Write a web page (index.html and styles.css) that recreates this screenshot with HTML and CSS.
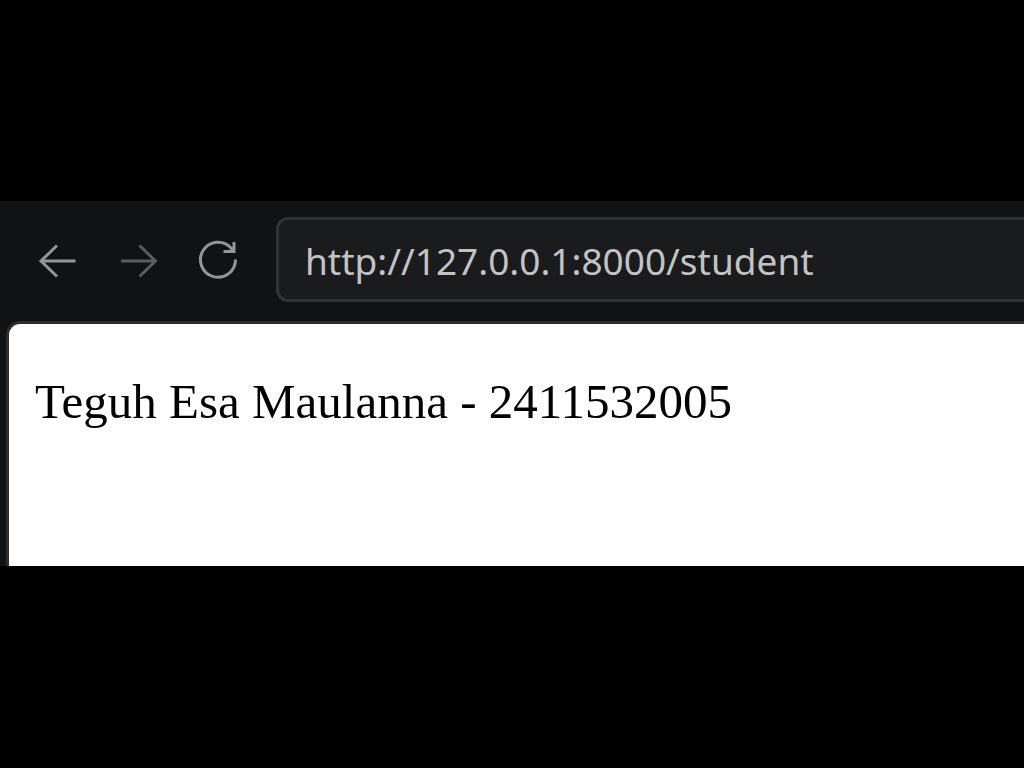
FILE: index.html
```html
<!DOCTYPE html>
<html lang="id">

<head>
  <meta charset="utf-8">
  <meta name="viewport" content="width=device-width, initial-scale=1">
  <title>Student</title>
  <link rel="stylesheet" href="styles.css">
</head>

<body>
  <div class="browser">
    <form class="toolbar">
      <div class="nav">
        <button type="button" class="nav-btn" aria-label="Back">
          <svg viewBox="0 0 40 40"><path d="M37.5 21H3M19 5.5L3 21L19 36.5"/></svg>
        </button>
        <button type="button" class="nav-btn dim" aria-label="Forward">
          <svg viewBox="0 0 40 40"><path d="M3 21H37.5M21.5 5.5L37.5 21L21.5 36.5"/></svg>
        </button>
        <button type="button" class="nav-btn" aria-label="Reload">
          <svg viewBox="0 0 40 40"><path d="M37.5 19.5A17.5 17.5 0 1 1 33 8L35.5 11M36 2V11.5H25.5"/></svg>
        </button>
      </div>
      <input type="text" class="address" aria-label="Address" value="http://127.0.0.1:8000/student">
    </form>
    <main class="page">
      <p>Teguh Esa Maulanna - 2411532005</p>
    </main>
  </div>
</body>

</html>
```

FILE: styles.css
```css
* {
  box-sizing: border-box;
}

body {
  margin: 0;
  padding: 201px 0;
  background: #000;
}

.browser {
  background: #111214;
  overflow: hidden;
}

.toolbar {
  display: flex;
  align-items: center;
  gap: 38px;
  padding: 16px 0 19px 38px;
}

.nav {
  display: flex;
  gap: 40px;
}

.nav-btn {
  width: 40px;
  height: 40px;
  padding: 0;
  border: 0;
  background: none;
  color: #959595;
}

.nav-btn.dim {
  color: #5c5c5c;
}

.nav-btn svg {
  display: block;
  fill: none;
  stroke: currentColor;
  stroke-width: 3;
}

.address {
  flex: 1;
  min-width: 0;
  height: 85px;
  padding: 2px 0 0 26px;
  border: 3px solid #313234;
  border-right: 0;
  border-radius: 12px 0 0 12px;
  outline: 0;
  background: #1a1b1d;
  color: #c3c3c3;
  font: 37px "Noto Sans", sans-serif;
}

.page {
  min-height: 245px;
  margin-left: 6px;
  padding: 50px 26px;
  border: 3px solid #2d2d2f;
  border-width: 3px 0 0 3px;
  border-radius: 14px 0 0 0;
  background: #fff;
  color: #000;
  font: 49px/56px "Liberation Serif", serif;
}

.page p {
  margin: 0;
}
```
